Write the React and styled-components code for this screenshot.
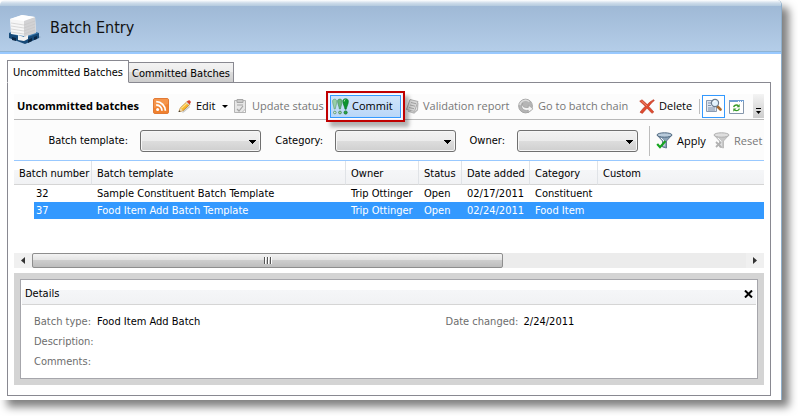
import React, { useState } from 'react';
import styled, { createGlobalStyle } from 'styled-components';

const tahoma = "Tahoma, 'DejaVu Sans Condensed', 'DejaVu Sans', sans-serif";
const segoe = "'Segoe UI', 'Open Sans', 'Noto Sans', sans-serif";

const GlobalStyle = createGlobalStyle`
  *, *::before, *::after {
    box-sizing: border-box;
  }
  body {
    margin: 0;
    background: #fff;
    color: #000;
    font: 11px/16px ${tahoma};
  }
  button, select {
    font: inherit;
    color: inherit;
    margin: 0;
  }
`;

const Page = styled.div`
  padding: 0 16px 16px 0;
  overflow: hidden;
`;
const Window = styled.div`
  border-right: 1px solid #8fafcb;
  border-radius: 5px 5px 0 0;
  background: #fff;
  box-shadow: 7px 7px 9px rgba(0, 0, 0, 0.5);
`;
const Header = styled.header`
  display: flex;
  align-items: center;
  gap: 8px;
  height: 54px;
  padding: 4px 8px 0;
  border-bottom: 2px solid #99c9ff;
  border-radius: 5px 5px 0 0;
  background: linear-gradient(#fff 0, #cddcea 3px, #b4cade 6px, #9fb9d6 6px, #b4cde8 51px, #8fb4d4 51px);
`;
const PageTitle = styled.h1`
  margin: 0;
  font-size: 16px;
  font-weight: normal;
  line-height: 24px;
  color: #111;
`;
const Body = styled.main`
  padding: 6px 10px 4px 7px;
`;
const Tabs = styled.div`
  display: flex;
  align-items: flex-end;
  margin-bottom: -1px;
`;
const Tab = styled.button`
  width: 106px;
  height: 21px;
  margin-left: -1px;
  padding: 2px 0 0;
  border: 1px solid #898991;
  background: linear-gradient(#f3f3f3, #ebebeb 50%, #dddddd 50%, #cdcdcd);
  white-space: nowrap;
`;
const ActiveTab = styled(Tab)`
  position: relative;
  width: 122px;
  height: 23px;
  margin-left: 0;
  border-bottom-color: #fff;
  background: #fff;
`;
const Panel = styled.section`
  border: 1px solid #898991;
  padding: 11px 6px 10px;
`;

const Toolbar = styled.div`
  display: flex;
  align-items: center;
  height: 26px;
  padding: 0 0 1px 3px;
  border-bottom: 1px solid #b8b8b8;
  background: #fcfcfc;
  font: 11px/16px ${segoe};
`;
const ToolbarTitle = styled.h2`
  flex: none;
  width: 132px;
  margin: 0;
  font-size: 11px;
  font-weight: bold;
  white-space: nowrap;
`;
const ToolButton = styled.button`
  display: flex;
  flex: none;
  align-items: center;
  gap: 4px;
  width: ${(p) => p.$width}px;
  height: 23px;
  padding: 0 2px 0 3px;
  border: 1px solid transparent;
  background: none;
  white-space: nowrap;

  &:disabled {
    color: #777;
  }
  svg {
    flex: none;
  }
`;
const CommitButton = styled(ToolButton)`
  position: relative;
  gap: 3px;
  padding: 0 1px;
  border-color: #3399ff;
  background: linear-gradient(#cfe4fb, #b9d7f8);

  &::after {
    content: '';
    position: absolute;
    inset: -5px;
    border: 2px solid #c00000;
    box-shadow: 4px 5px 4px rgba(0, 0, 0, 0.3), inset 0 0 0 1px #eef;
  }
`;
const ToggleButton = styled(ToolButton)`
  border-color: #3399ff;
  background: #fff;
`;
const Caret = styled.span`
  margin-left: 2px;
  border: 3px solid transparent;
  border-top-color: #000;
  border-bottom: 0;
`;
const Divider = styled.span`
  flex: none;
  width: 1px;
  height: ${(p) => p.$height}px;
  margin: 0 2px 0 ${(p) => p.$gap}px;
  background: #bdbdbd;
`;
const Overflow = styled.button`
  display: flex;
  align-items: flex-end;
  justify-content: center;
  align-self: stretch;
  flex: none;
  width: 11px;
  margin-left: auto;
  padding: 0 0 3px;
  border: 0;
  background: linear-gradient(#f4f4f4, #cdcdcd);
`;

const Filters = styled.form`
  display: flex;
  align-items: center;
  height: 40px;
  padding-top: 1px;
  background: #fcfcfc;
`;
const FilterLabel = styled.label`
  display: flex;
  flex: none;
  align-items: center;
  justify-content: flex-end;
  gap: 12px;
  width: ${(p) => p.$width}px;
  white-space: nowrap;
`;
const Select = styled.select`
  appearance: none;
  width: 121px;
  height: 22px;
  border: 1px solid #707070;
  border-radius: 3px;
  background:
    linear-gradient(#000, #000) right 4px top 9px / 7px 1px no-repeat,
    linear-gradient(#000, #000) right 5px top 10px / 5px 1px no-repeat,
    linear-gradient(#000, #000) right 6px top 11px / 3px 1px no-repeat,
    linear-gradient(#000, #000) right 7px top 12px / 1px 1px no-repeat,
    linear-gradient(#f2f2f2, #ebebeb 50%, #dddddd 50%, #cfcfcf);
  box-shadow: inset 0 0 0 1px #f6f6f6;
`;
const FilterActions = styled.div`
  display: flex;
  align-items: center;
  font: 11px/16px ${segoe};
`;

const GridArea = styled.div`
  height: 93px;
  border-top: 1px solid #99c9ff;
  overflow: hidden;
`;
const Grid = styled.table`
  width: 100%;
  table-layout: fixed;
  border-collapse: separate;
  border-spacing: 0;
  white-space: nowrap;

  th {
    height: 24px;
    padding: 2px 0 0 5px;
    border-right: 1px solid #e0e3e7;
    border-bottom: 1px solid #d5d5d5;
    background: linear-gradient(#fff 40%, #f5f6f8 40%, #f1f2f4);
    font-weight: normal;
    text-align: left;
  }
  th:last-child {
    border-right: 0;
  }
`;
const Row = styled.tr`
  td {
    height: 17px;
    padding: 1px 0 0 5px;
    line-height: 16px;
    ${(p) => p.$selected && 'background: #3399ff; color: #fff;'}
  }
  td:first-child {
    background: none;
  }
  td:nth-child(2) {
    padding-left: 2px;
  }
`;

const ScrollBar = styled.div`
  display: flex;
  height: 15px;
  background: #ececec;
`;
const ScrollButton = styled.button`
  display: flex;
  flex: none;
  align-items: center;
  justify-content: center;
  width: 18px;
  padding: 0;
  border: 0;
  background: #f0f0f0;
`;
const ScrollTrack = styled.div`
  flex: 1;
  display: flex;
`;
const ScrollThumb = styled.div`
  display: flex;
  align-items: center;
  justify-content: center;
  width: 66%;
  border: 1px solid #8e8e8e;
  border-radius: 2px;
  background: linear-gradient(#f3f3f3, #e3e3e3 50%, #cdcdcd 50%, #bdbdbd);
`;

const DetailsFrame = styled.div`
  margin-top: 5px;
  border: 6px solid #d4d4d4;
`;
const Details = styled.section`
  border: 1px solid #a6a6ab;
  padding: 1px;
`;
const DetailsHeader = styled.header`
  display: flex;
  align-items: center;
  justify-content: space-between;
  height: 24px;
  padding: 3px 3px 0;
  border-bottom: 1px solid #d5d5d5;
  background: linear-gradient(#fff 40%, #f5f6f8 40%, #f1f2f4);
`;
const DetailsTitle = styled.h3`
  margin: 0;
  font-size: 11px;
  font-weight: normal;
`;
const CloseButton = styled.button`
  display: flex;
  padding: 0;
  border: 0;
  background: none;
`;
const Fields = styled.div`
  display: grid;
  grid-template-columns: 57fr 43fr;
  height: 72px;
  padding: 7px 0 0 12px;
`;
const FieldList = styled.dl`
  display: grid;
  grid-template-columns: ${(p) => p.$label}px 1fr;
  grid-auto-rows: 20px;
  align-items: center;
  margin: 0;

  dt {
    color: #6d6d6d;
  }
  dd {
    margin: 0;
  }
`;

const PalletIcon = () => (
  <svg width="34" height="34" viewBox="0 0 34 34" aria-hidden="true">
    <path d="M16 31l14-6 3 1-14 6z" fill="#6f87a0" opacity=".6" />
    <path d="M1 22l10-3 20 3v5l-14 6L1 27z" fill="#174a78" />
    <path d="M1 22l16 5 14-5-14-4z" fill="#3e7db1" />
    <path d="M4 26l4 1v3l-4-1zM20 29l4-2v3l-4 2zM26 26l3-1v3l-3 1z" fill="#0b2745" />
    <path d="M2 8l12-4 13 2 1 15-12 4L3 23z" fill="#f6f6f6" />
    <path d="M16 9l11-3 1 16-12 4z" fill="#d2d2d4" />
    <path d="M2 8l12-4 13 2-11 4z" fill="#fff" />
    <path d="M3 12l13 2 11-4M3 15l13 2 11-4M3 18l13 2 11-4M3 21l13 2 11-4" stroke="#c4c4c4" fill="none" opacity=".6" />
    <path d="M10 24l6 2 4-2v4l-4 2-6-1z" fill="#f2f2f2" />
  </svg>
);
const RssIcon = () => (
  <svg width="16" height="16" viewBox="0 0 16 16" aria-hidden="true">
    <rect x=".5" y=".5" width="15" height="15" rx="1.5" fill="#f0812f" stroke="#e27a35" />
    <path d="M1 1h14v5L1 10z" fill="#f8a35f" opacity=".6" />
    <circle cx="4.6" cy="11.5" r="1.5" fill="#fff" />
    <path d="M3.2 7a5.8 5.8 0 015.8 5.8M3.2 3.6a9.2 9.2 0 019.2 9.2" stroke="#fff" strokeWidth="1.8" fill="none" />
  </svg>
);
const PencilIcon = () => (
  <svg width="14" height="15" viewBox="0 0 15 15" aria-hidden="true">
    <path d="M4 14l8-7 1 1-7 6z" fill="#c5c5c5" />
    <path d="M1 13l1.5-4L10 2l3 3-7.5 7z" fill="#f8b62d" stroke="#a76c14" strokeWidth=".7" />
    <path d="M3.5 9.5L10.5 3" stroke="#ffe48c" strokeWidth="1.3" />
    <path d="M1 13l1.5-4 2.8 2.8z" fill="#efd5a8" />
    <path d="M.6 13.5l.7-2 1.4 1.3z" fill="#222" />
    <path d="M9.3 2.7L11 1.2q1.2-.8 2.2.3t.3 2L12.2 5.3z" fill="#d8402c" />
    <path d="M9 3l3 2.8" stroke="#cfd9e8" strokeWidth="1.2" />
  </svg>
);
const ClipboardIcon = () => (
  <svg width="15" height="16" viewBox="0 0 15 16" aria-hidden="true">
    <path d="M1.5 2.5h11v12h-11z" fill="#e6e6e6" stroke="#b4b4b4" />
    <path d="M4 1.5h6v3H4z" fill="#c8c8c8" stroke="#a6a6a6" />
    <path d="M4 7h6M4 11l2 2 4-5" stroke="#a4a4a4" fill="none" strokeWidth="1.2" />
    <path d="M9 14.5l3.5-3.5v3.5z" fill="#fff" stroke="#b5b5b5" />
  </svg>
);
const CommitIcon = () => (
  <svg width="17" height="17" viewBox="0 0 17 17" aria-hidden="true">
    <path d="M.6 3C.6.6 4.7.6 4.7 3c0 3-.8 5-1.5 8h-1C1.8 8 .6 6 .6 3z" fill="#98cfa8" stroke="#5a9c70" strokeWidth=".6" />
    <path d="M5.6 3c0-2.6 4.4-2.6 4.4 0 0 3-1 5-1.6 8h-1C7 8 5.6 6 5.6 3z" fill="#67b57c" stroke="#3c8954" strokeWidth=".6" />
    <path d="M10.8 3.2c0-3.4 5.6-3.4 5.6 0 0 3-1.6 5-2.2 8H13c-.4-3-2.2-5-2.2-8z" fill="#0d9430" stroke="#08702a" strokeWidth=".6" />
    <path d="M12.2 3.5q.2-1.8 1.2-2" stroke="#a6eaa9" fill="none" />
    <circle cx="2.8" cy="14.5" r="1.3" fill="#d4ead8" stroke="#4d8f62" strokeWidth=".8" />
    <circle cx="8" cy="14.5" r="1.4" fill="#9fd0a9" stroke="#3d8652" strokeWidth=".8" />
    <circle cx="13.6" cy="14.5" r="1.6" fill="#28a846" stroke="#126c2b" strokeWidth=".8" />
  </svg>
);
const ReportIcon = () => (
  <svg width="14" height="16" viewBox="0 0 14 16" aria-hidden="true">
    <path d="M5 1.5l8 2-3.5 10-8-2z" fill="#d6d6d6" stroke="#aaa" />
    <path d="M6 4.5l5 1.2M5 7l5 1.2M4 9.5l5 1.2" stroke="#a0a0a0" />
    <path d="M12.8 5l-.5 7L9 15l-6-2" fill="none" stroke="#b8b8b8" strokeWidth="1.5" />
  </svg>
);
const ChainIcon = () => (
  <svg width="16" height="17" viewBox="0 0 17 17" aria-hidden="true">
    <circle cx="8" cy="8" r="7.3" fill="#b5b5b5" stroke="#a2a2a2" />
    <path d="M2 7a6 6 0 0110-3.5" fill="none" stroke="#dcdcdc" strokeWidth="1.5" />
    <path d="M5 5c-1 4 2 5 6 4.500V7l5 4-5 4v-2.500C6 13.5 2 10 5 5z" fill="#f3f3f3" stroke="#999" strokeWidth=".7" />
  </svg>
);
const DeleteIcon = () => (
  <svg width="16" height="15" viewBox="0 0 16 15" aria-hidden="true">
    <path d="M.7 2.2L3 .8q3 2.6 5.2 4.8Q11 2.4 14.5.7l.9.8Q12 4 9.8 7.4q2.6 2.6 5 5.6l-1.9 1.3Q10.6 11.6 8 9.2 5.5 12 3.4 14.4L1 13.2Q3.6 9.8 6.2 7.3 3.5 4.6.7 2.2z" fill="#df4b2f" stroke="#b8341f" strokeWidth=".6" />
    <path d="M2.5 2l5.5 5" stroke="#f39a80" strokeWidth=".8" />
  </svg>
);
const PreviewIcon = () => (
  <svg width="16" height="16" viewBox="0 0 16 16" aria-hidden="true">
    <path d="M.5 2.5h10v11H.5z" fill="#dde4ee" stroke="#8a9ab0" />
    <path d="M2 5h3M2 7.5h3M2 10h7M2 12h7" stroke="#8193ab" />
    <path d="M11.5 8.5l3 3" stroke="#a8692d" strokeWidth="2.6" strokeLinecap="round" />
    <circle cx="9" cy="5" r="3.6" fill="#e2f2fc" stroke="#6b7c8e" strokeWidth="1.2" />
    <path d="M7 4.5q.7-1.7 2.5-1.5" stroke="#fff" fill="none" />
  </svg>
);
const RefreshIcon = () => (
  <svg width="15" height="15" viewBox="0 0 15 15" aria-hidden="true">
    <path d="M.5 1.5h14v13H.5z" fill="#fff" stroke="#8596ab" />
    <path d="M0 1h15v2H0z" fill="#6f9fd4" />
    <path d="M9 2.5h1M11 2.5h1M13 2.5h1" stroke="#fff" />
    <path d="M4.7 8.2q.4-2.2 2.8-2.2 1.3 0 2 .8M10.3 9.500q-.4 2.2-2.8 2.2-1.3 0-2-.8" stroke="#3a9c2a" strokeWidth="1.3" fill="none" />
    <path d="M10.7 5v3.200H7.500zM4.300 12.700V9.500h3.200z" fill="#3a9c2a" />
  </svg>
);
const OverflowIcon = () => (
  <svg width="5" height="7" viewBox="0 0 5 7" aria-hidden="true">
    <path d="M0 .5h5" stroke="#000" />
    <path d="M0 3h5L2.5 6z" fill="#000" />
  </svg>
);
const FunnelIcon = ({ muted }) => (
  <svg width="17" height="17" viewBox="0 0 17 17" aria-hidden="true">
    <path d="M1 3l5.500 6v6l4 1V9L16 3z" fill={muted ? '#c8c8c8' : '#8ca3b8'} stroke={muted ? '#b4b4b4' : '#4f6880'} strokeWidth=".8" />
    <ellipse cx="8.5" cy="3" rx="7.5" ry="2.2" fill={muted ? '#dedede' : '#b9cbdb'} stroke={muted ? '#b0b0b0' : '#4f6880'} strokeWidth="1" />
    <path d="M5 6l3 3v5" stroke="#f3f6f8" fill="none" />
    {muted ? (
      <path d="M3 10l5 5M8 10l-5 5" stroke="#b2b2b2" strokeWidth="1.8" />
    ) : (
      <path d="M1.2 12L4 15.2 9.5 9" stroke="#16a51f" strokeWidth="2.2" fill="none" />
    )}
  </svg>
);
const CloseIcon = () => (
  <svg width="9" height="8" viewBox="0 0 9 8" aria-hidden="true">
    <path d="M1 .5l7 7M8 .5l-7 7" stroke="#000" strokeWidth="2" />
  </svg>
);
const ArrowIcon = ({ right }) => (
  <svg width="4" height="7" viewBox="0 0 4 7" aria-hidden="true">
    <path d={right ? 'M0 0v7l4-3.5z' : 'M4 0v7L0 3.5z'} fill="#333" />
  </svg>
);
const GripIcon = () => (
  <svg width="8" height="7" viewBox="0 0 8 7" aria-hidden="true">
    <path d="M.5 0v7M3.5 0v7M6.5 0v7" stroke="#555" />
    <path d="M1.5 0v7M4.5 0v7M7.5 0v7" stroke="#fff" />
  </svg>
);

const batches = [
  {
    number: 32, template: 'Sample Constituent Batch Template', owner: 'Trip Ottinger', status: 'Open', added: '02/17/2011', category: 'Constituent',
  },
  {
    number: 37, template: 'Food Item Add Batch Template', owner: 'Trip Ottinger', status: 'Open', added: '02/24/2011', category: 'Food Item',
  },
];
const filters = [
  { label: 'Batch template:', width: 247 },
  { label: 'Category:', width: 195 },
  { label: 'Owner:', width: 182 },
];
const columnWidths = [20, 58, 254, 73, 43, 68, 68];

export default function App() {
  const [selected, setSelected] = useState(37);

  return (
    <Page>
      <GlobalStyle />
      <Window>
        <Header>
          <PalletIcon />
          <PageTitle>Batch Entry</PageTitle>
        </Header>
        <Body>
          <Tabs role="tablist">
            <ActiveTab role="tab" aria-selected="true">Uncommitted Batches</ActiveTab>
            <Tab role="tab" aria-selected="false">Committed Batches</Tab>
          </Tabs>
          <Panel>
            <Toolbar>
              <ToolbarTitle>Uncommitted batches</ToolbarTitle>
              <ToolButton $width={25} aria-label="RSS feed"><RssIcon /></ToolButton>
              <ToolButton $width={55}>
                <PencilIcon />
                Edit
                <Caret />
              </ToolButton>
              <ToolButton $width={101} disabled>
                <ClipboardIcon />
                Update status
              </ToolButton>
              <CommitButton $width={71}>
                <CommitIcon />
                Commit
              </CommitButton>
              <ToolButton $width={113} disabled>
                <ReportIcon />
                Validation report
              </ToolButton>
              <ToolButton $width={121} disabled>
                <ChainIcon />
                Go to batch chain
              </ToolButton>
              <ToolButton $width={59}>
                <DeleteIcon />
                Delete
              </ToolButton>
              <Divider $height={15} $gap={5} />
              <ToggleButton $width={23} aria-label="Preview" aria-pressed="true"><PreviewIcon /></ToggleButton>
              <ToolButton $width={23} aria-label="Refresh"><RefreshIcon /></ToolButton>
              <Overflow aria-label="More"><OverflowIcon /></Overflow>
            </Toolbar>
            <Filters onSubmit={(e) => e.preventDefault()}>
              {filters.map((f) => (
                <FilterLabel key={f.label} $width={f.width}>
                  {f.label}
                  <Select><option value="" aria-label="Any" /></Select>
                </FilterLabel>
              ))}
              <FilterActions>
                <Divider $height={30} $gap={11} />
                <ToolButton $width={57} type="submit">
                  <FunnelIcon />
                  Apply
                </ToolButton>
                <ToolButton $width={54} type="reset" disabled>
                  <FunnelIcon muted />
                  Reset
                </ToolButton>
              </FilterActions>
            </Filters>
            <GridArea>
              <Grid>
                <colgroup>
                  {columnWidths.map((w, i) => <col key={i} width={w} />)}
                  <col />
                </colgroup>
                <thead>
                  <tr>
                    <th colSpan={2}>Batch number</th>
                    <th>Batch template</th>
                    <th>Owner</th>
                    <th>Status</th>
                    <th>Date added</th>
                    <th>Category</th>
                    <th>Custom</th>
                  </tr>
                </thead>
                <tbody>
                  {batches.map((b) => (
                    <Row key={b.number} $selected={b.number === selected} onClick={() => setSelected(b.number)}>
                      <td />
                      <td>{b.number}</td>
                      <td>{b.template}</td>
                      <td>{b.owner}</td>
                      <td>{b.status}</td>
                      <td>{b.added}</td>
                      <td>{b.category}</td>
                      <td />
                    </Row>
                  ))}
                </tbody>
              </Grid>
            </GridArea>
            <ScrollBar>
              <ScrollButton aria-label="Scroll left"><ArrowIcon /></ScrollButton>
              <ScrollTrack>
                <ScrollThumb><GripIcon /></ScrollThumb>
              </ScrollTrack>
              <ScrollButton aria-label="Scroll right"><ArrowIcon right /></ScrollButton>
            </ScrollBar>
            <DetailsFrame>
              <Details>
                <DetailsHeader>
                  <DetailsTitle>Details</DetailsTitle>
                  <CloseButton aria-label="Close details"><CloseIcon /></CloseButton>
                </DetailsHeader>
                <Fields>
                  <FieldList $label={63}>
                    <dt>Batch type:</dt>
                    <dd>Food Item Add Batch</dd>
                    <dt>Description:</dt>
                    <dd />
                    <dt>Comments:</dt>
                    <dd />
                  </FieldList>
                  <FieldList $label={78}>
                    <dt>Date changed:</dt>
                    <dd>2/24/2011</dd>
                  </FieldList>
                </Fields>
              </Details>
            </DetailsFrame>
          </Panel>
        </Body>
      </Window>
    </Page>
  );
}
